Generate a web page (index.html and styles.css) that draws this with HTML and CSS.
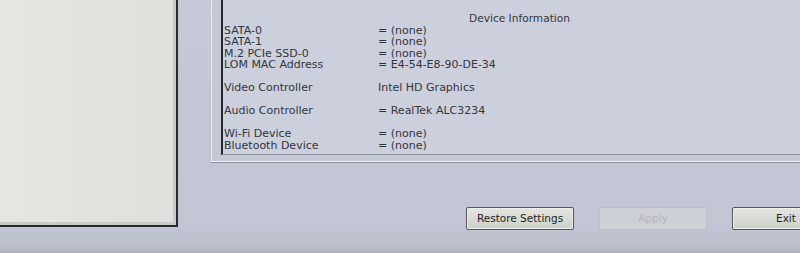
FILE: index.html
```html
<!DOCTYPE html>
<html>
<head>
<meta charset="utf-8">
<link rel="stylesheet" href="styles.css">
</head>
<body>
<div class="screen">
  <div class="side"></div>
  <div class="main">
    <div class="frame">
      <div class="panel">
        <div class="heading">Device Information</div>
        <div class="grid">
          <div>SATA-0</div><div>= (none)</div>
          <div>SATA-1</div><div>= (none)</div>
          <div>M.2 PCIe SSD-0</div><div>= (none)</div>
          <div>LOM MAC Address</div><div>= E4-54-E8-90-DE-34</div>
          <div class="gap">Video Controller</div><div class="gap">Intel HD Graphics</div>
          <div class="gap">Audio Controller</div><div class="gap">= RealTek ALC3234</div>
          <div class="gap">Wi-Fi Device</div><div class="gap">= (none)</div>
          <div>Bluetooth Device</div><div>= (none)</div>
        </div>
      </div>
    </div>
    <div class="buttons">
      <div class="btn">Restore Settings</div>
      <div class="btn disabled">Apply</div>
      <div class="btn exit">Exit</div>
    </div>
  </div>
</div>
</body>
</html>
```

FILE: styles.css
```css
html, body {
  margin: 0;
  padding: 0;
}
body {
  width: 800px;
  height: 253px;
  overflow: hidden;
  background: #c2c6d4;
  font-family: "DejaVu Sans", Verdana, sans-serif;
  color: #34353d;
}
.screen {
  display: flex;
  height: 253px;
  background: linear-gradient(to bottom, #c5c9d7 0%, #c2c6d4 90%, #b9bdca 98%, #aeb2be 100%);
}
.side {
  width: 176px;
  height: 225px;
  flex: none;
  background: linear-gradient(to right, #e5e5e2, #dfdfdb);
  border-right: 2px solid #2a2a2c;
  border-bottom: 2px solid #2a2a2c;
  box-shadow: inset -3px -3px 0 #c9c9c7;
}
.main {
  flex: 1;
  margin-left: 33px;
  display: flex;
  flex-direction: column;
  min-width: 0;
  overflow: hidden;
}
.frame {
  height: 156px;
  border-left: 1px solid #e9ebf2;
  border-bottom: 1px solid #eceef4;
  padding-left: 9px;
  padding-bottom: 5px;
  background: #c5c9d6;
  box-shadow: 0 1px 0 #8e929c;
}
.panel {
  height: 155px;
  border-left: 2px solid #26272b;
  border-bottom: 1px solid #8d919c;
  background: #ccd0dc;
  padding-left: 1px;
  box-sizing: border-box;
  padding-top: 13px;
  font-size: 11px;
  line-height: 11.5px;
}
.heading {
  padding-left: 245px;
  font-size: 10.6px;
}
.grid {
  display: grid;
  grid-template-columns: 154px auto;
}
.gap {
  margin-top: 11.5px;
}
.buttons {
  display: flex;
  gap: 25px;
  margin-top: 45px;
  padding-left: 255px;
}
.btn {
  flex: none;
  width: 106px;
  height: 21px;
  border: 1px solid #55575c;
  border-radius: 2px;
  background: linear-gradient(to bottom, #e4e4e0, #cfd0cc);
  box-shadow: inset 0 0 0 1px #eeeeea;
  font-size: 10.5px;
  line-height: 21px;
  text-align: center;
  color: #1e1f22;
}
.btn.disabled {
  border-color: #bcbfc6;
  background: #cdd0d6;
  box-shadow: none;
  color: #b3b6bd;
}
.btn.exit {
  width: 120px;
  text-align: left;
  padding-left: 43px;
  box-sizing: border-box;
  height: 23px;
}
```
